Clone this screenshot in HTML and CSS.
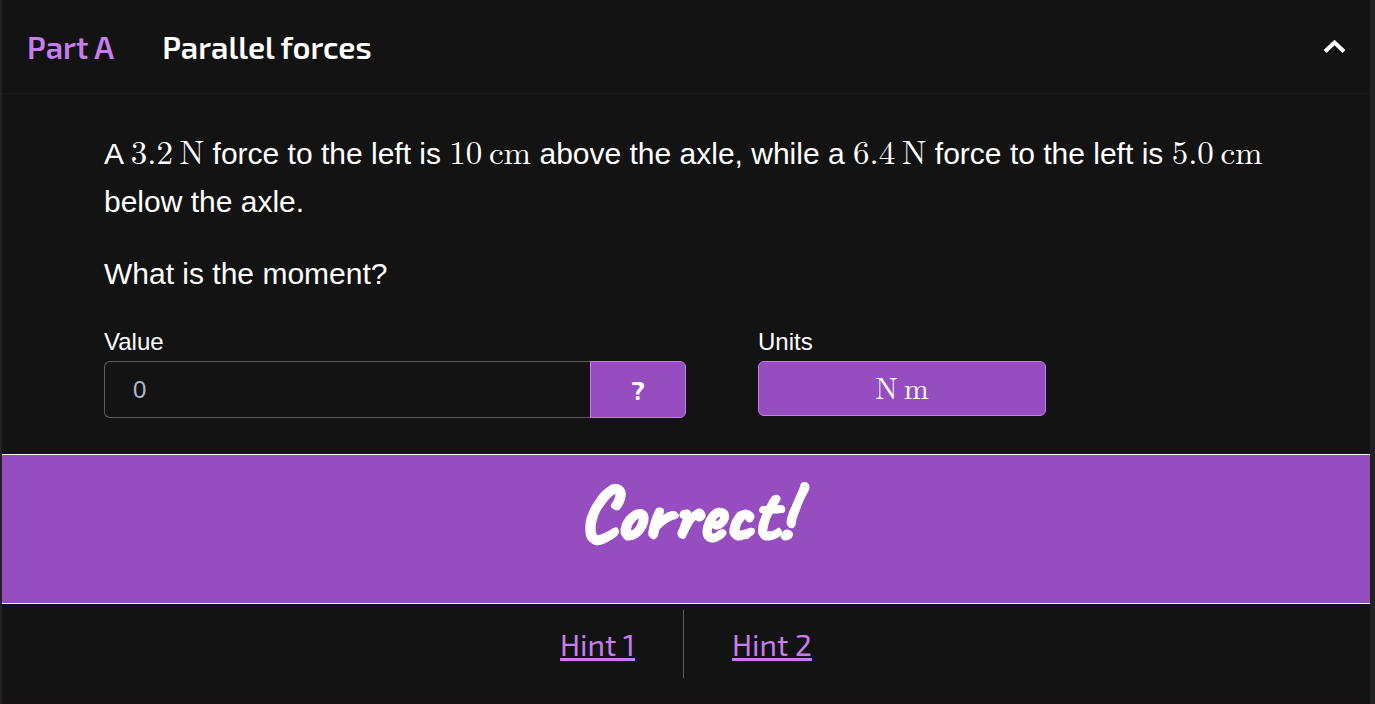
FILE: index.html
```html
<!DOCTYPE html>
<html lang="en">
<head>
<meta charset="utf-8">
<meta name="viewport" content="width=device-width, initial-scale=1">
<title>Parallel forces</title>
<link rel="stylesheet" href="styles.css">
</head>
<body>
<main class="part">
  <header class="part-header">
    <span class="part-label">Part A</span>
    <h1 class="part-title">Parallel forces</h1>
    <button class="collapse" type="button" aria-label="Collapse part">
      <svg width="24" height="16" viewBox="0 0 24 16" aria-hidden="true"><path d="M3 12.500 12.500 3.500l9.500 9" fill="none" stroke="currentColor" stroke-width="4"/></svg>
    </button>
  </header>
  <section class="question">
    <p class="prose">A <span class="math">3.2&#8201;N</span> force to the left is <span class="math">10&#8201;cm</span> above the axle, while a <span class="math">6.4&#8201;N</span> force to the left is <span class="math">5.0&#8201;cm</span> below the axle.</p>
    <p class="prose">What is the moment?</p>
    <form class="answer">
      <div class="field value-field">
        <label class="field-label" for="value">Value</label>
        <div class="input-group">
          <input class="value-input" id="value" type="text" placeholder="0">
          <button class="help" type="button">?</button>
        </div>
      </div>
      <div class="field units-field">
        <label class="field-label" for="units">Units</label>
        <button class="units" id="units" type="button">N&#8201;m</button>
      </div>
    </form>
  </section>
  <div class="result" role="status"><span class="result-text">Correct!</span></div>
  <nav class="hints">
    <div class="hint-cell"><a class="hint" href="#hint-1">Hint 1</a></div>
    <div class="hint-cell"><a class="hint" href="#hint-2">Hint 2</a></div>
  </nav>
</main>
</body>
</html>
```
FILE: styles.css
```css
* {
  box-sizing: border-box;
}

body {
  margin: 0;
  background: #222;
  color: #fff;
  font-family: "Liberation Sans", Arial, sans-serif;
}

.part {
  min-height: 100vh;
  margin: 0 5px 0 2px;
  background: #131313;
  border-bottom: 2px solid #171013;
}

.part-header {
  display: flex;
  align-items: center;
  gap: 48px;
  padding: 23px 24px 23px 25px;
  border-bottom: 1px solid #1b1b1b;
  font-family: "Exo 2", "Noto Sans", sans-serif;
  font-size: 31px;
  font-weight: 600;
  line-height: 47px;
}

.part-label {
  color: #c77dee;
}

.part-title {
  margin: 0;
  font: inherit;
}

.collapse {
  display: flex;
  margin-left: auto;
  padding: 0;
  border: 0;
  background: none;
  color: #fff;
}

.question {
  padding: 36px 102px;
}

.prose {
  margin: 0 0 24px;
  font-size: 30px;
  line-height: 48px;
}

.math {
  font-family: "Latin Modern Roman", "Liberation Serif", serif;
  font-size: 33px;
  line-height: 1;
}

.answer {
  display: flex;
  align-items: flex-start;
  gap: 72px;
}

.field {
  display: flex;
  flex-direction: column;
}

.value-field {
  flex: 0 1 50%;
}

.units-field {
  flex: 0 1 288px;
}

.field-label {
  font-size: 24px;
  line-height: 39px;
}

.input-group {
  display: flex;
}

.value-input {
  flex: 1;
  min-width: 0;
  height: 57px;
  padding: 0 28px;
  border: 1px solid #5c5c5c;
  border-right: 0;
  border-radius: 6px 0 0 6px;
  background: #131313;
  color: #fff;
  font-family: "Liberation Sans", Arial, sans-serif;
  font-size: 24px;
}

.value-input::placeholder {
  color: #b0b8cb;
}

.help {
  width: 96px;
  border: 1px solid #c77dee;
  border-radius: 0 6px 6px 0;
  background: #964dbf;
  color: #fff;
  font-family: "Exo 2", "Noto Sans", sans-serif;
  font-size: 26px;
  font-weight: 700;
}

.units {
  height: 55px;
  padding: 0 0 4px;
  border: 1px solid #c77dee;
  border-radius: 6px;
  background: #964dbf;
  color: #fff;
  font-family: "Latin Modern Roman", "Liberation Serif", serif;
  font-size: 30px;
}

.result {
  display: flex;
  justify-content: center;
  padding: 24px 0 54px;
  border: solid #fff;
  border-width: 1px 0;
  background: #964dbf;
}

.result-text {
  font-family: "Caveat", "Caveat Brush", Lato, sans-serif;
  font-size: 76px;
  font-weight: 700;
  line-height: 70px;
  -webkit-text-stroke: 3px #fff;
}

.hints {
  display: flex;
  justify-content: center;
  padding: 6px 0 24px;
}

.hint-cell {
  padding: 12px 48px;
}

.hint-cell + .hint-cell {
  border-left: 1px solid #5c5c5c;
}

.hint {
  color: #c77dee;
  font-family: "Exo 2", "Noto Sans", sans-serif;
  font-size: 30px;
  line-height: 44px;
  text-decoration-thickness: 3px;
  text-underline-offset: 2px;
}
```
